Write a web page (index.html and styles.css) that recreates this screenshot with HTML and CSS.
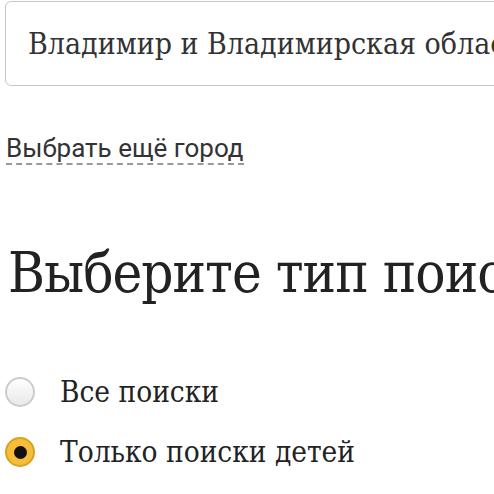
FILE: index.html
```html
<!DOCTYPE html>
<html lang="ru">
<head>
<meta charset="utf-8">
<link rel="stylesheet" href="styles.css">
</head>
<body>
<div class="page">
  <div class="field">Владимир и Владимирская область</div>
  <div class="more"><span class="more-link">Выбрать ещё город</span></div>
  <h1 class="title">Выберите тип поиска</h1>
  <div class="options">
    <label class="option"><span class="radio"></span><span class="label">Все поиски</span></label>
    <label class="option"><span class="radio checked"></span><span class="label">Только поиски детей</span></label>
  </div>
</div>
</body>
</html>
```
FILE: styles.css
```css
html, body {
  margin: 0;
  padding: 0;
  background: #fff;
  overflow: hidden;
}
.page {
  width: 700px;
  padding: 1px 0 0 5px;
  color: #333;
  font-family: "DejaVu Serif Condensed", "DejaVu Serif", serif;
  font-stretch: condensed;
}
.field {
  box-sizing: border-box;
  height: 85px;
  border: 1px solid #c8c8c8;
  border-radius: 6px;
  padding: 0 0 0 22px;
  display: flex;
  align-items: center;
  font-size: 30px;
  white-space: nowrap;
  color: #333;
}
.more {
  margin-top: 46px;
  padding-left: 1px;
  font-family: Roboto, sans-serif;
  font-stretch: normal;
  font-size: 26px;
  line-height: 32px;
}
.more-link {
  color: #333;
  border-bottom: 2px dashed #999;
}
.title {
  margin: 74px 0 0 3px;
  font-size: 56px;
  font-weight: normal;
  letter-spacing: -1px;
  line-height: 70px;
  white-space: nowrap;
  color: #222;
}
.options {
  margin-top: 64px;
  display: flex;
  flex-direction: column;
  gap: 20px;
}
.option {
  display: flex;
  align-items: center;
  gap: 25px;
}
.radio {
  box-sizing: border-box;
  width: 30px;
  height: 30px;
  border-radius: 50%;
  border: 2px solid #ccc;
  background: linear-gradient(#fff, #e8e8e8);
  flex: none;
  display: flex;
  align-items: center;
  justify-content: center;
}
.radio.checked {
  border-color: #d9a21f;
  background: #f6bd3a;
}
.radio.checked::after {
  content: "";
  width: 13px;
  height: 13px;
  border-radius: 50%;
  background: #111;
}
.label {
  font-size: 29.5px;
  line-height: 40px;
  color: #222;
}
```
